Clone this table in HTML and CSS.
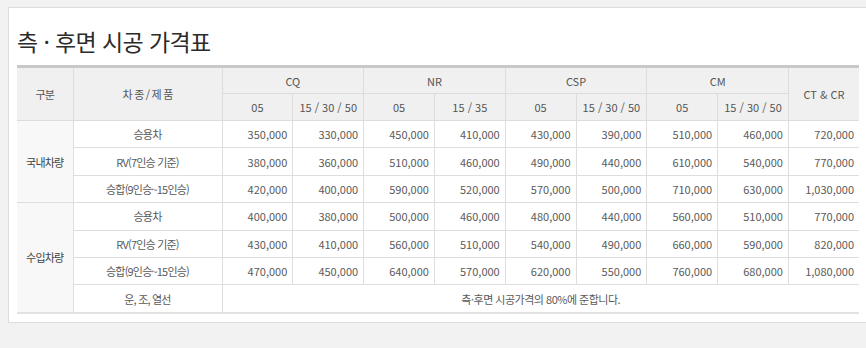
FILE: index.html
```html
<!DOCTYPE html>
<html lang="ko">
<head>
<meta charset="utf-8">
<title>측 · 후면 시공 가격표</title>
<link rel="stylesheet" href="styles.css">
</head>
<body>
<div class="panel">
  <h2 class="title">측 · 후면 시공 가격표</h2>
  <table class="price">
    <colgroup>
      <col class="c-group"><col class="c-name">
      <col class="c-num"><col class="c-num"><col class="c-num"><col class="c-num">
      <col class="c-num"><col class="c-num"><col class="c-num"><col class="c-num">
      <col class="c-last">
    </colgroup>
    <thead>
      <tr class="h1">
        <th rowspan="2" class="ko">구분</th>
        <th rowspan="2" class="ko">차 종 / 제 품</th>
        <th colspan="2">CQ</th>
        <th colspan="2">NR</th>
        <th colspan="2">CSP</th>
        <th colspan="2">CM</th>
        <th rowspan="2">CT &amp; CR</th>
      </tr>
      <tr class="h2">
        <th>05</th><th>15 / 30 / 50</th>
        <th>05</th><th>15 / 35</th>
        <th>05</th><th>15 / 30 / 50</th>
        <th>05</th><th>15 / 30 / 50</th>
      </tr>
    </thead>
    <tbody>
      <tr>
        <td rowspan="3" class="grp ko">국내차량</td>
        <td class="name ko">승용차</td>
        <td>350,000</td><td>330,000</td><td>450,000</td><td>410,000</td><td>430,000</td><td>390,000</td><td>510,000</td><td>460,000</td><td>720,000</td>
      </tr>
      <tr>
        <td class="name ko">RV(7인승 기준)</td>
        <td>380,000</td><td>360,000</td><td>510,000</td><td>460,000</td><td>490,000</td><td>440,000</td><td>610,000</td><td>540,000</td><td>770,000</td>
      </tr>
      <tr>
        <td class="name ko">승합(9인승~15인승)</td>
        <td>420,000</td><td>400,000</td><td>590,000</td><td>520,000</td><td>570,000</td><td>500,000</td><td>710,000</td><td>630,000</td><td>1,030,000</td>
      </tr>
      <tr>
        <td rowspan="4" class="grp ko">수입차량</td>
        <td class="name ko">승용차</td>
        <td>400,000</td><td>380,000</td><td>500,000</td><td>460,000</td><td>480,000</td><td>440,000</td><td>560,000</td><td>510,000</td><td>770,000</td>
      </tr>
      <tr>
        <td class="name ko">RV(7인승 기준)</td>
        <td>430,000</td><td>410,000</td><td>560,000</td><td>510,000</td><td>540,000</td><td>490,000</td><td>660,000</td><td>590,000</td><td>820,000</td>
      </tr>
      <tr>
        <td class="name ko">승합(9인승~15인승)</td>
        <td>470,000</td><td>450,000</td><td>640,000</td><td>570,000</td><td>620,000</td><td>550,000</td><td>760,000</td><td>680,000</td><td>1,080,000</td>
      </tr>
      <tr>
        <td class="name ko">운, 조, 열선</td>
        <td colspan="9" class="note">측·후면 시공가격의 80%에 준합니다.</td>
      </tr>
    </tbody>
  </table>
</div>
</body>
</html>
```

FILE: styles.css
```css
html, body {
  margin: 0;
  padding: 0;
  overflow: hidden;
}
body {
  background: #f2f2f2;
  padding: 7px 0 0 8px;
  font-family: "Noto Sans CJK KR", "Noto Sans", sans-serif;
  color: #555;
}
.panel {
  width: 880px;
  background: #fff;
  border: 1px solid #dcdcdc;
  padding: 18px 0 8px 8px;
}
.title {
  margin: 0 0 9px 0;
  font-size: 23px;
  line-height: 30px;
  font-weight: normal;
  color: #2b2b2b;
  letter-spacing: -0.6px;
}
.price {
  width: 842px;
  border-collapse: collapse;
  table-layout: fixed;
  border-top: 3px solid #c8c8c8;
  border-bottom: 2px solid #e2e2e2;
  font-size: 11px;
}
.c-group { width: 56px; }
.c-name { width: 149px; }
.c-num { width: 70.8px; }
.c-last { width: 70.6px; }

.price th {
  background: #f0f0f0;
  font-weight: normal;
  color: #555;
  text-align: center;
  padding: 0;
  border: 1px solid #dcdcdc;
}
.price th:first-child { border-left: none; }
.price tr.h1 th:last-child { border-right: none; }
.price tr.h1 th { height: 25px; }
.price tr.h2 th { height: 26px; }

.price td {
  height: 26.4px;
  padding: 0 5px 0 0;
  text-align: right;
  color: #5a5a5a;
  border: 1px solid #dedede;
}
.price td:last-child { border-right: none; }
.price td.grp {
  background: #f8f8f8;
  border-left: none;
  text-align: center;
  padding: 0;
  color: #444;
}
.price td.name {
  text-align: center;
  padding: 0;
}
.price td.note {
  text-align: center;
  padding: 0;
  letter-spacing: -0.5px;
}
.ko { letter-spacing: -0.8px; }
```
